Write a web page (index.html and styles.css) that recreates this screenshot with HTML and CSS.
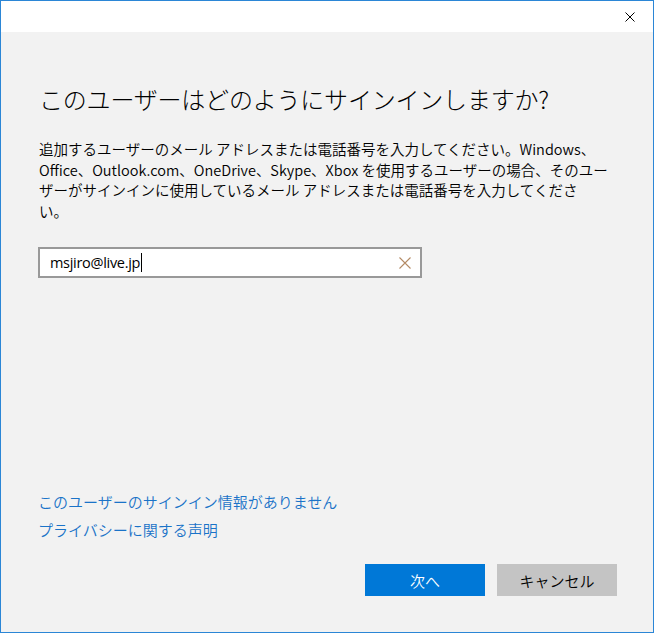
FILE: index.html
```html
<!DOCTYPE html>
<html lang="ja">
<head>
<meta charset="utf-8">
<title>Microsoft アカウント</title>
<link rel="stylesheet" href="styles.css">
</head>
<body>
<div class="window">
  <div class="titlebar">
    <button class="close" aria-label="閉じる">
      <svg width="10" height="10" viewBox="0 0 10 10"><path d="M0.5 0.5 L9.5 9.5 M9.5 0.5 L0.5 9.5" stroke="#000" stroke-width="1" fill="none"/></svg>
    </button>
  </div>
  <div class="content">
    <div class="top">
      <h1 class="heading">このユーザーはどのようにサインインしますか?</h1>
      <p class="desc">追加するユーザーのメール アドレスまたは電話番号を入力してください。Windows、<br>Office、Outlook.com、OneDrive、Skype、Xbox を使用するユーザーの場合、そのユー<br>ザーがサインインに使用しているメール アドレスまたは電話番号を入力してくださ<br>い。</p>
      <div class="field">
        <span class="value">msjiro@live.jp</span><span class="caret"></span>
        <span class="clear">
          <svg width="12" height="12" viewBox="0 0 12 12"><path d="M0.5 0.5 L11.5 11.5 M11.5 0.5 L0.5 11.5" stroke="#b48a64" stroke-width="1.1" fill="none"/></svg>
        </span>
      </div>
    </div>
    <div class="bottom">
      <a class="link" href="#">このユーザーのサインイン情報がありません</a>
      <a class="link" href="#">プライバシーに関する声明</a>
      <div class="buttons">
        <button class="btn primary">次へ</button>
        <button class="btn secondary">キャンセル</button>
      </div>
    </div>
  </div>
</div>
</body>
</html>
```

FILE: styles.css
```css
* { box-sizing: border-box; }
html, body { margin: 0; padding: 0; }
body {
  width: 654px;
  height: 633px;
  font-family: "Noto Sans CJK JP", sans-serif;
  color: #000;
}
.window {
  width: 654px;
  height: 633px;
  border: 1px solid #2b86d6;
  background: #f2f2f2;
  display: flex;
  flex-direction: column;
}
.titlebar {
  height: 31px;
  background: #fff;
  display: flex;
  justify-content: flex-end;
  align-items: flex-start;
  flex: none;
}
.close {
  border: 0;
  background: transparent;
  padding: 0;
  width: 46px;
  height: 31px;
  display: flex;
  align-items: center;
  justify-content: center;
}
.close svg { display: block; margin-top: 0; margin-left: 0; }
.content {
  flex: 1;
  display: flex;
  flex-direction: column;
  padding: 0 36px 36px 37px;
}
.heading {
  margin: 51px 0 0 1px;
  font-size: 24px;
  font-weight: 300;
  line-height: 32px;
  letter-spacing: -0.2px;
  color: #000;
}
.desc {
  margin: 24px 0 0 1px;
  font-size: 14.5px;
  font-weight: 350;
  line-height: 20.5px;
  white-space: nowrap;
  color: #000;
}
.field {
  margin-top: 26px;
  width: 384px;
  height: 31px;
  background: #fff;
  border: 2px solid #999;
  display: flex;
  align-items: center;
  padding-left: 10px;
}
.value {
  font-family: "Open Sans", "Noto Sans CJK JP", sans-serif;
  font-size: 14.5px;
  letter-spacing: -0.3px;
  color: #000;
}
.caret {
  display: inline-block;
  width: 1px;
  height: 19px;
  background: #000;
  margin-left: 1px;
}
.clear {
  margin-left: auto;
  margin-right: 9px;
  display: flex;
}
.clear svg { display: block; }
.bottom {
  margin-top: auto;
  display: flex;
  flex-direction: column;
}
.link {
  font-size: 15px;
  font-weight: 350;
  line-height: 28px;
  color: #1a73c8;
  text-decoration: none;
}
.buttons {
  margin-top: 20px;
  display: flex;
  justify-content: flex-end;
  gap: 12px;
}
.btn {
  width: 120px;
  height: 32px;
  border: 0;
  font-family: "Noto Sans CJK JP", sans-serif;
  font-size: 15px;
  font-weight: 350;
  padding: 0;
}
.primary { background: #0078d7; color: #fff; }
.secondary { background: #c4c4c4; color: #000; }
```
